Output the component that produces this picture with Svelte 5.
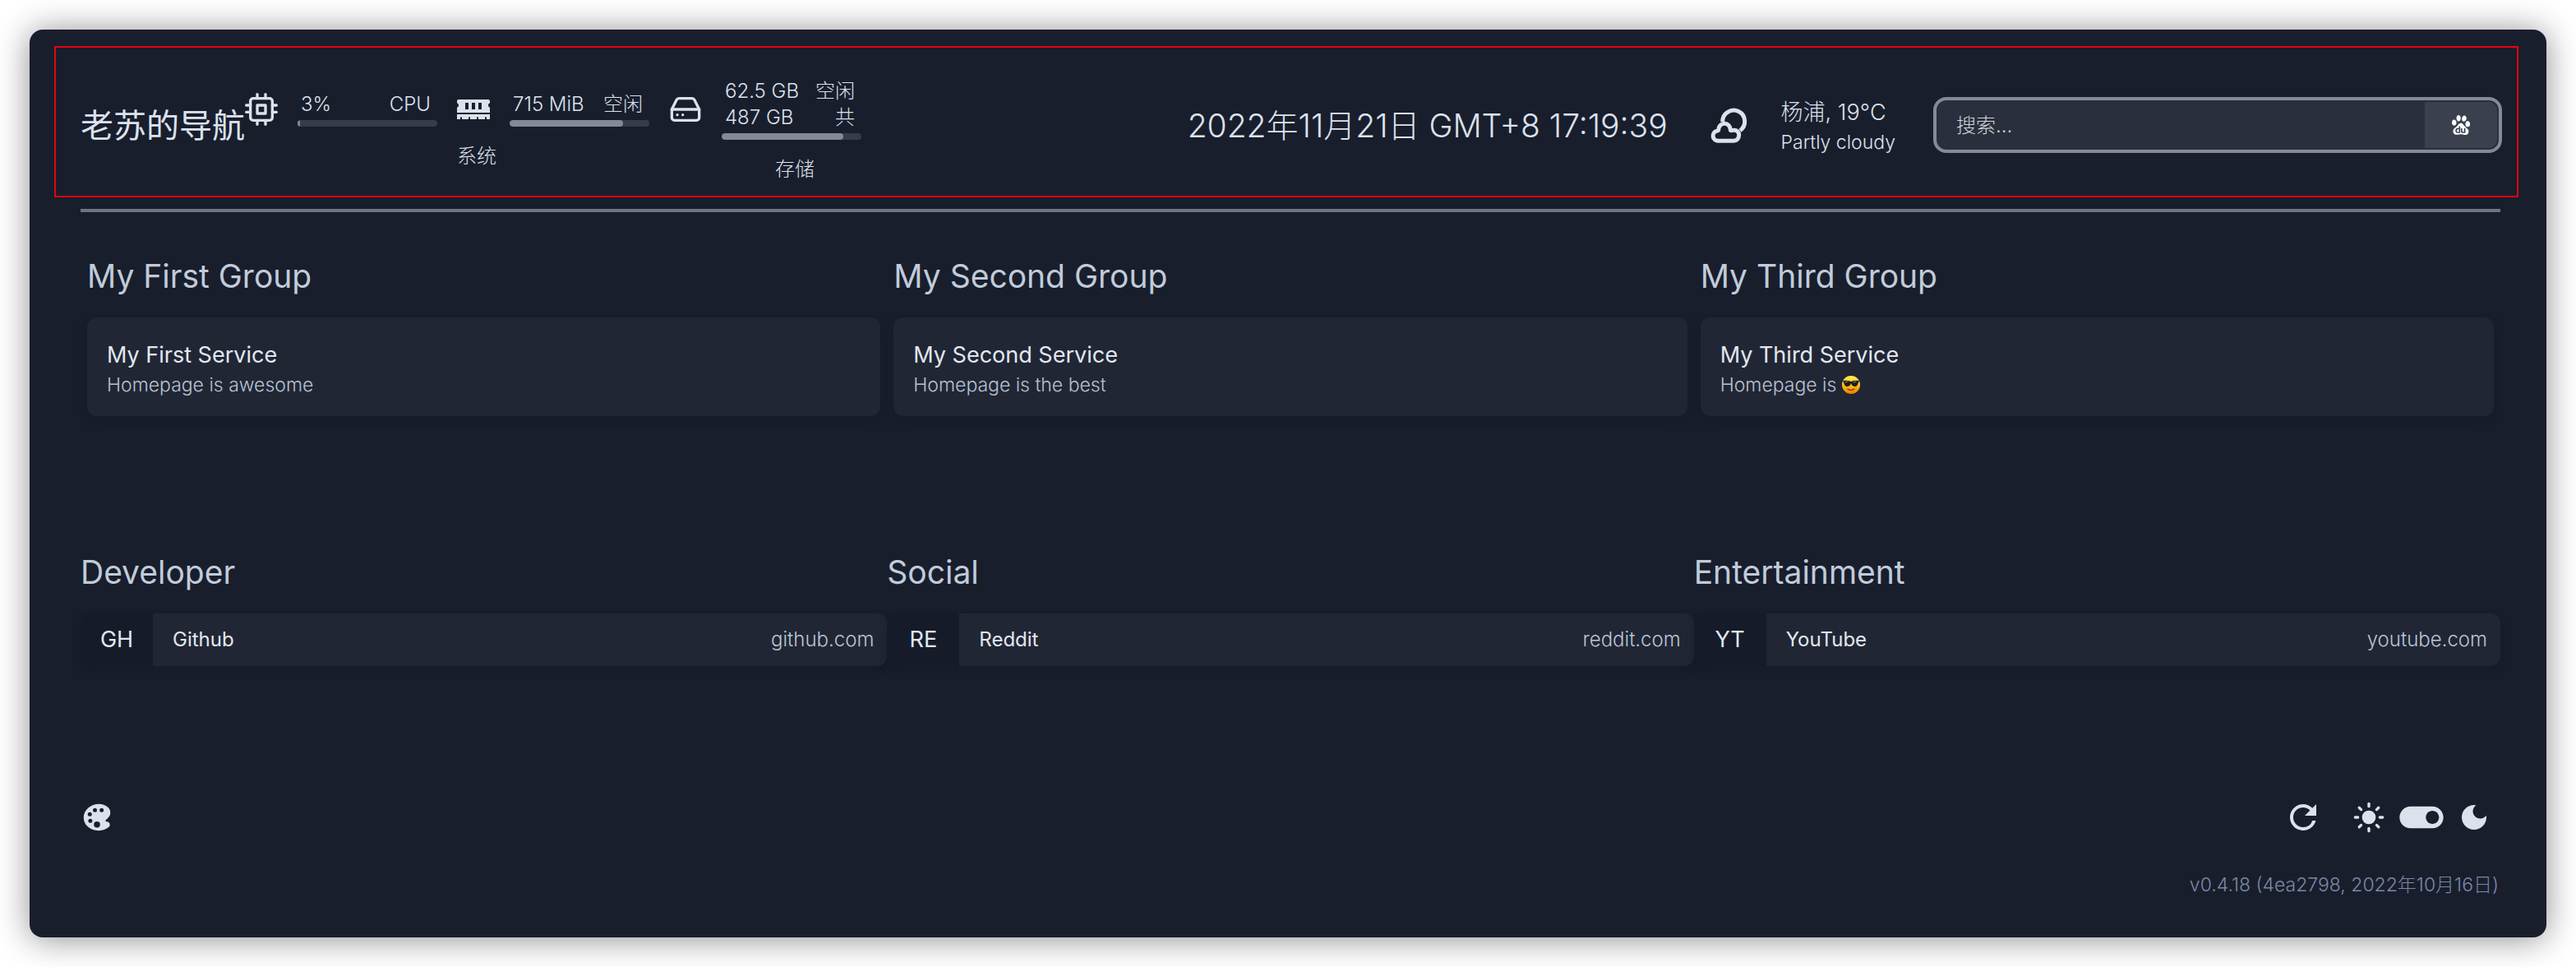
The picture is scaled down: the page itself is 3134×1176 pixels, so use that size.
<script>
  const systemResources = [
    { icon: 'cpu', lines: [['3%', 'CPU']], used: 2 },
    { icon: 'memory', lines: [['715 MiB', '空闲']], used: 81 }
  ];
  const storageResources = [
    { icon: 'disk', lines: [['62.5 GB', '空闲'], ['487 GB', '共']], used: 87 }
  ];
  const resourceGroups = [
    { label: '系统', items: systemResources },
    { label: '存储', items: storageResources }
  ];

  const serviceGroups = [
    { name: 'My First Group', service: 'My First Service', text: 'Homepage is awesome' },
    { name: 'My Second Group', service: 'My Second Service', text: 'Homepage is the best' },
    { name: 'My Third Group', service: 'My Third Service', text: 'Homepage is', cool: true }
  ];

  const bookmarkGroups = [
    { name: 'Developer', abbr: 'GH', title: 'Github', host: 'github.com' },
    { name: 'Social', abbr: 'RE', title: 'Reddit', host: 'reddit.com' },
    { name: 'Entertainment', abbr: 'YT', title: 'YouTube', host: 'youtube.com' }
  ];

  const rays = [0, 45, 90, 135, 180, 225, 270, 315];

  let query = $state('');
</script>

<div class="shell">
  <header class="topbar">
    <h1 class="site-title">老苏的导航</h1>

    <div class="resources">
      {#each resourceGroups as group}
        <section class="resource-group">
          <div class="resource-row">
            {#each group.items as item}
              <div class="resource">
                {#if item.icon === 'cpu'}
                  <svg class="resource-icon" viewBox="0 0 24 24" fill="none" stroke="currentColor" stroke-width="2" stroke-linecap="round" stroke-linejoin="round" aria-hidden="true">
                    <rect x="4" y="4" width="16" height="16" rx="2" />
                    <rect x="9" y="9" width="6" height="6" />
                    <path d="M9 1v3M15 1v3M9 20v3M15 20v3M20 9h3M20 14h3M1 9h3M1 14h3" />
                  </svg>
                {:else if item.icon === 'memory'}
                  <svg class="resource-icon" viewBox="0 0 640 512" fill="currentColor" aria-hidden="true">
                    <path d="M640 130.94V96c0-17.67-14.33-32-32-32H32C14.33 64 0 78.33 0 96v34.94c18.6 6.61 32 24.19 32 45.06s-13.4 38.45-32 45.06V320h640v-98.94c-18.6-6.61-32-24.19-32-45.06s13.4-38.45 32-45.06zM224 256h-64V128h64v128zm128 0h-64V128h64v128zm128 0h-64V128h64v128zM0 448h64v-26.67c0-8.84 7.16-16 16-16s16 7.16 16 16V448h128v-26.67c0-8.84 7.16-16 16-16s16 7.16 16 16V448h128v-26.67c0-8.84 7.16-16 16-16s16 7.16 16 16V448h128v-26.67c0-8.84 7.16-16 16-16s16 7.16 16 16V448h64v-96H0v96z" />
                  </svg>
                {:else}
                  <svg class="resource-icon" viewBox="0 0 24 24" fill="none" stroke="currentColor" stroke-width="2" stroke-linecap="round" stroke-linejoin="round" aria-hidden="true">
                    <path d="M22 12H2" />
                    <path d="M5.45 5.11L2 12v6a2 2 0 0 0 2 2h16a2 2 0 0 0 2-2v-6l-3.45-6.89A2 2 0 0 0 16.76 4H7.24a2 2 0 0 0-1.79 1.11z" />
                    <path d="M6 16h.01M10 16h.01" />
                  </svg>
                {/if}
                <div class="meter">
                  {#each item.lines as line}
                    <div class="meter-line"><span>{line[0]}</span><span>{line[1]}</span></div>
                  {/each}
                  <div class="track"><div class="fill" style="width: {item.used}%"></div></div>
                </div>
              </div>
            {/each}
          </div>
          <div class="resource-label">{group.label}</div>
        </section>
      {/each}
    </div>

    <time class="clock">2022年11月21日 GMT+8 17:19:39</time>

    <div class="weather">
      <svg class="weather-icon" viewBox="48 57 144 144" fill="none" stroke="currentColor" stroke-width="15" stroke-linejoin="round" aria-hidden="true">
        <path d="M98 114a40.500 40.500 0 1 1 64 32" />
        <path d="M80 184a18.500 18.500 0 0 1-4-36q4-1 7-3c0-14 10-24 22-24s22 10 22 24q3 2 10 0a17 17 0 0 1 21 17c0 13-8 22-20 22z" />
      </svg>
      <div>
        <div class="temp">杨浦, 19°C</div>
        <div class="condition">Partly cloudy</div>
      </div>
    </div>

    <form class="search" onsubmit={(e) => e.preventDefault()}>
      <input class="search-input" type="text" placeholder="搜索…" aria-label="搜索" bind:value={query} />
      <button class="search-button" type="submit" aria-label="Baidu">
        <svg viewBox="0 0 24 24" fill="currentColor" aria-hidden="true">
          <path d="M9.154 0C7.71 0 6.54 1.658 6.54 3.707c0 2.051 1.171 3.71 2.615 3.71 1.446 0 2.614-1.659 2.614-3.71C11.768 1.658 10.6 0 9.154 0zm7.025.594C14.86.58 13.347 2.589 13.2 3.927c-.187 1.745.25 3.487 2.179 3.735 1.933.25 3.175-1.806 3.422-3.364.252-1.555-.995-3.364-2.362-3.674a1.218 1.218 0 0 0-.261-.03zM3.582 5.535a2.811 2.811 0 0 0-.156.008c-2.118.19-2.428 3.24-2.428 3.24-.287 1.41.686 4.425 3.297 3.864 2.617-.561 2.262-3.68 2.183-4.362-.125-1.018-1.292-2.773-2.896-2.75zm16.534 1.753c-2.308 0-2.617 2.119-2.617 3.616 0 1.43.121 3.425 2.988 3.362 2.867-.063 2.553-3.238 2.553-3.988 0-.745-.62-2.99-2.924-2.99zm-8.264 2.478c-1.424.014-2.708.925-3.323 1.947-1.118 1.868-2.863 3.05-3.112 3.363-.25.309-3.61 2.116-2.864 5.42.746 3.301 3.365 3.237 3.365 3.237s1.93.19 4.171-.31c2.24-.495 4.17.123 4.17.123s5.233 1.748 6.665-1.616c1.43-3.364-.808-5.109-.808-5.109s-2.99-2.306-4.736-4.798c-1.072-1.665-2.348-2.268-3.528-2.257zm-2.234 3.84l1.542.024v8.197H7.758c-1.47-.291-2.055-1.292-2.13-1.462-.072-.173-.488-.976-.268-2.343.635-2.049 2.447-2.196 2.447-2.196h1.81zm3.964 2.39v3.881c.096.413.612.488.612.488h1.614v-4.343h1.689v5.782h-3.915c-1.517-.39-1.59-1.465-1.59-1.465v-4.317zm-5.458 1.147c-.66.197-.978.708-1.05.928-.076.22-.247.78-.1 1.269.294 1.095 1.248 1.144 1.248 1.144h1.37v-3.34z" />
        </svg>
      </button>
    </form>
  </header>

  <hr class="divider" />

  <main>
    <div class="grid">
      {#each serviceGroups as group}
        <section class="service-group">
          <h2>{group.name}</h2>
          <article class="card">
            <div class="card-title">{group.service}</div>
            <div class="card-text">
              {group.text}
              {#if group.cool}
                <svg class="emoji" viewBox="0 0 24 24" role="img" aria-label="😎">
                  <defs>
                    <linearGradient id="face" x1="0" y1="0" x2="0" y2="1">
                      <stop offset="0" stop-color="#fff24a" />
                      <stop offset="0.500" stop-color="#ffc21a" />
                      <stop offset="1" stop-color="#f57a05" />
                    </linearGradient>
                  </defs>
                  <circle cx="12" cy="12" r="11" fill="url(#face)" />
                  <path d="M2 7q5-1 10 1 5-2 10-1l-1 2q-1 5-4 5-4 0-5-4-1 4-5 4-3 0-4-5z" fill="#1d1c1e" />
                  <path d="M5 9l3-1M15 9l3-1" stroke="#8b8b8b" stroke-width="1" stroke-linecap="round" />
                  <path d="M8 17q4 3 8 0" fill="none" stroke="#7c3d05" stroke-width="1.500" stroke-linecap="round" />
                </svg>
              {/if}
            </div>
          </article>
        </section>
      {/each}
    </div>

    <div class="grid bookmarks">
      {#each bookmarkGroups as group}
        <section>
          <h2>{group.name}</h2>
          <a class="bookmark" href="https://{group.host}">
            <span class="abbr">{group.abbr}</span>
            <span class="bookmark-title">{group.title}</span>
            <span class="host">{group.host}</span>
          </a>
        </section>
      {/each}
    </div>
  </main>

  <footer>
    <div class="controls">
      <button class="icon-button" aria-label="Palette">
        <svg class="md" viewBox="0 0 512 512" fill="currentColor" aria-hidden="true">
          <path d="M441 336.2l-.06-.05c-9.93-9.18-22.78-11.34-32.16-12.92l-.69-.12c-9.05-1.49-10.48-2.5-14.58-6.17-2.44-2.17-5.35-5.65-5.35-9.94s2.91-7.77 5.34-9.94l30.28-26.87c25.92-22.91 40.2-53.66 40.2-86.59s-14.25-63.68-40.2-86.6c-35.89-31.59-85-49-138.37-49C223.72 48 162 71.37 116 112.11c-43.87 38.77-68 90.71-68 146.24s24.16 107.47 68 146.23c21.75 19.24 47.49 34.18 76.52 44.42a266.17 266.17 0 0 0 86.87 15h1.81c61 0 119.09-20.57 159.39-56.4 9.7-8.56 15.15-20.83 15.34-34.56.21-14.17-5.37-27.95-14.93-36.84zM112 208a32 32 0 1 1 32 32 32 32 0 0 1-32-32zm40 135a32 32 0 1 1 32-32 32 32 0 0 1-32 32zm40-199a32 32 0 1 1 32 32 32 32 0 0 1-32-32zm64 271a48 48 0 1 1 48-48 48 48 0 0 1-48 48zm72-239a32 32 0 1 1 32-32 32 32 0 0 1-32 32z" />
        </svg>
      </button>
      <div class="right-controls">
        <button class="icon-button refresh" aria-label="Refresh">
          <svg class="lg" viewBox="0 0 24 24" fill="currentColor" aria-hidden="true">
            <path d="M17.65 6.35A7.958 7.958 0 0 0 12 4c-4.42 0-7.99 3.58-7.99 8s3.57 8 7.99 8c3.73 0 6.84-2.55 7.73-6h-2.08A5.99 5.99 0 0 1 12 18c-3.31 0-6-2.69-6-6s2.69-6 6-6c1.66 0 3.14.69 4.22 1.78L13 11h7V4l-2.35 2.35z" />
          </svg>
        </button>
        <svg class="md" viewBox="0 0 24 24" aria-hidden="true">
          <circle cx="12" cy="12" r="5" fill="currentColor" />
          {#each rays as angle}
            <path d="M12 2v2" transform="rotate({angle} 12 12)" stroke="currentColor" stroke-width="2" stroke-linecap="round" />
          {/each}
        </svg>
        <button class="icon-button" role="switch" aria-checked="true" aria-label="Dark mode">
          <svg class="xl" viewBox="0 0 24 24" fill="currentColor" aria-hidden="true">
            <path d="M17 7H7c-2.76 0-5 2.24-5 5s2.24 5 5 5h10c2.76 0 5-2.24 5-5s-2.24-5-5-5zm0 8c-1.66 0-3-1.34-3-3s1.34-3 3-3 3 1.34 3 3-1.34 3-3 3z" />
          </svg>
        </button>
        <svg class="md" viewBox="0 0 24 24" fill="currentColor" aria-hidden="true">
          <path d="M12 3c-4.97 0-9 4.03-9 9s4.03 9 9 9 9-4.03 9-9c0-.46-.04-.92-.1-1.36-.98 1.37-2.58 2.26-4.4 2.26-2.98 0-5.4-2.42-5.4-5.4 0-1.81.89-3.42 2.26-4.4C12.92 3.04 12.46 3 12 3z" />
        </svg>
      </div>
    </div>
    <div class="version">v0.4.18 (4ea2798, 2022年10月16日)</div>
  </footer>
</div>

<style>
  :global(body) {
    margin: 0;
    background: #fff;
  }

  .shell {
    box-sizing: border-box;
    margin: 36px;
    padding: 20px 34px 48px 30px;
    border-radius: 16px;
    background: #191e2d;
    box-shadow: 0 2px 40px rgba(0, 0, 0, 0.45);
    color: #dbe2ec;
    font-family: Inter, "Noto Sans CJK SC", sans-serif;
    font-size: 24px;
    font-weight: 300;
    line-height: 32px;
  }

  svg {
    display: block;
    flex: none;
  }

  .topbar {
    display: flex;
    align-items: center;
    padding: 23px 18px 16px 30px;
    border: 2px solid #e00510;
  }

  .site-title {
    margin: 0;
    padding-top: 2px;
    font-size: 40px;
    font-weight: 400;
    line-height: 48px;
    white-space: nowrap;
  }

  .resources {
    display: flex;
    align-items: center;
    gap: 24px;
    margin-top: 14px;
  }

  .resource-row {
    display: flex;
    gap: 24px;
  }

  .resource {
    display: flex;
    align-items: center;
    gap: 24px;
  }

  .resource-icon {
    width: 40px;
    height: 40px;
  }

  .meter {
    width: 170px;
  }

  .meter-line {
    display: flex;
    justify-content: space-between;
    padding: 0 8px 0 4px;
    white-space: nowrap;
  }

  .track {
    height: 8px;
    margin-top: 3px;
    overflow: hidden;
    border-radius: 4px;
    background: #373c4a;
  }

  .fill {
    height: 100%;
    border-radius: 4px;
    background: #858a98;
  }

  .resource-label {
    margin-top: 20px;
    padding-left: 72px;
    text-align: center;
  }

  .clock {
    margin-left: auto;
    padding-top: 2px;
    font-size: 39px;
    line-height: 48px;
    white-space: nowrap;
  }

  .weather {
    display: flex;
    align-items: center;
    gap: 40px;
    margin: 0 46px 0 50px;
    padding-top: 2px;
    white-space: nowrap;
  }

  .weather-icon {
    width: 48px;
    height: 48px;
  }

  .temp {
    font-size: 27px;
    line-height: 40px;
  }

  .condition {
    font-size: 23px;
  }

  .search {
    box-sizing: border-box;
    display: flex;
    flex: none;
    width: 692px;
    height: 68px;
    padding: 2px;
    border: 4px solid #858a96;
    border-radius: 16px;
    background: #2a2f3d;
  }

  .search-input {
    flex: 1;
    min-width: 0;
    padding: 2px 22px 0;
    border: 0;
    outline: 0;
    background: transparent;
    color: inherit;
    font: inherit;
  }

  .search-input::placeholder {
    color: #d2d5da;
    opacity: 1;
  }

  .search-button {
    display: flex;
    align-items: center;
    justify-content: center;
    width: 88px;
    padding: 0;
    border: 0;
    border-radius: 0 10px 10px 0;
    background: #3b404e;
    color: #fff;
  }

  .search-button svg {
    width: 24px;
    height: 24px;
  }

  .divider {
    height: 4px;
    margin: 14px 22px 0 32px;
    border: 0;
    background: #6f7484;
  }

  .grid {
    display: grid;
    grid-template-columns: repeat(3, 1fr);
    margin: 50px 22px 0 32px;
  }

  .bookmarks {
    margin-top: 162px;
  }

  .service-group {
    padding: 0 8px;
  }

  h2 {
    margin: 0 0 22px;
    color: #c0ccda;
    font-size: 39px;
    font-weight: 400;
    line-height: 56px;
  }

  .card {
    padding: 26px 24px 22px;
    border-radius: 12px;
    background: #212635;
    box-shadow: 0 6px 12px rgba(10, 14, 26, 0.2);
  }

  .card-title {
    color: #e2e8f0;
    font-size: 27px;
    font-weight: 400;
    line-height: 40px;
  }

  .card-text {
    display: flex;
    align-items: center;
    gap: 6px;
    color: #b6c2d2;
    font-size: 23px;
  }

  .emoji {
    width: 24px;
    height: 24px;
  }

  .bookmark {
    display: flex;
    align-items: center;
    height: 64px;
    overflow: hidden;
    border-radius: 12px;
    background: #212635;
    box-shadow: 0 6px 12px rgba(10, 14, 26, 0.2);
    color: #e2e8f0;
    font-weight: 400;
    line-height: 66px;
    text-decoration: none;
  }

  .abbr {
    width: 88px;
    background: #161b2a;
    font-size: 27px;
    text-align: center;
  }

  .bookmark-title {
    flex: 1;
    padding-left: 24px;
  }

  .host {
    padding-right: 16px;
    color: #b9c5d4;
    font-weight: 300;
  }

  footer {
    margin: 160px 22px 0 32px;
  }

  .controls,
  .right-controls {
    display: flex;
    align-items: center;
  }

  .controls {
    justify-content: space-between;
    height: 48px;
  }

  .right-controls {
    gap: 12px;
    padding-right: 12px;
  }

  .icon-button {
    padding: 0;
    border: 0;
    background: transparent;
    color: inherit;
  }

  .refresh {
    margin-right: 24px;
  }

  .md {
    width: 40px;
    height: 40px;
  }

  .lg {
    width: 48px;
    height: 48px;
  }

  .xl {
    width: 64px;
    height: 64px;
  }

  .version {
    margin-top: 42px;
    padding-right: 2px;
    color: #7a89a3;
    font-size: 23px;
    text-align: right;
  }
</style>
